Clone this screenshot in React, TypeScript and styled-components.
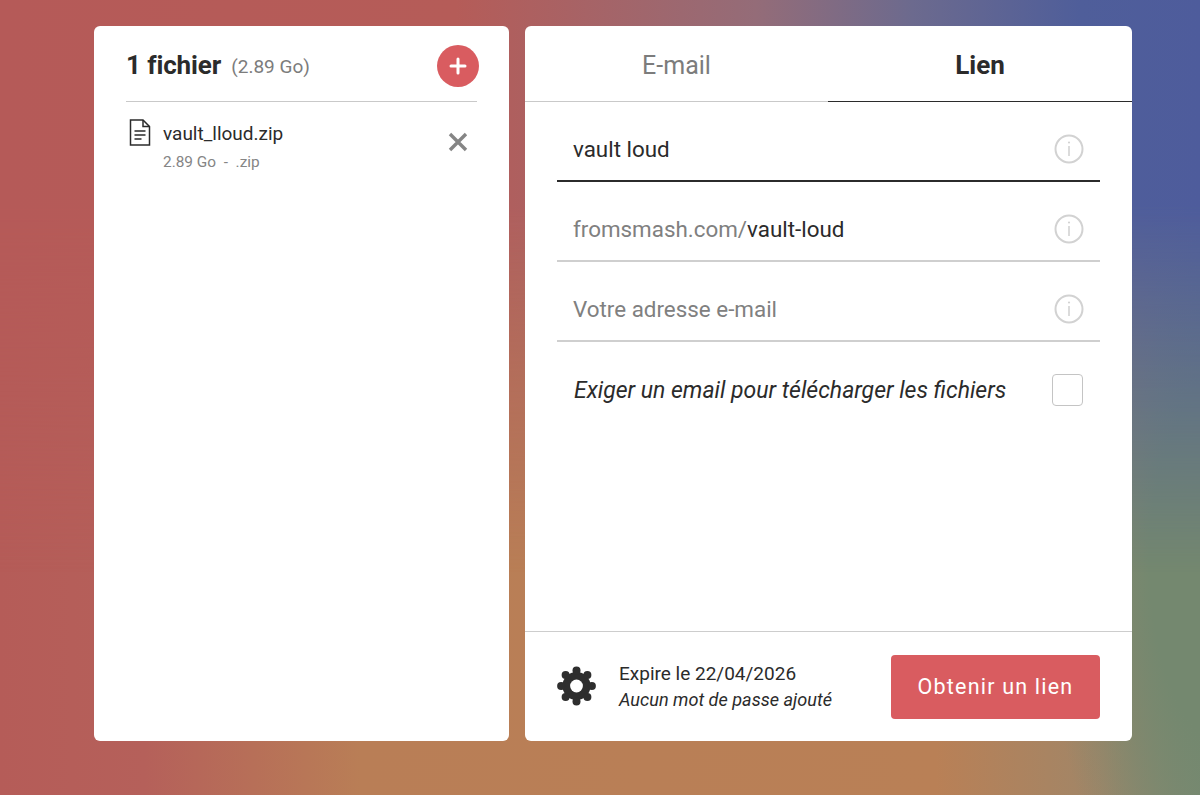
import styled, { createGlobalStyle } from 'styled-components';

const GlobalStyle = createGlobalStyle`
  html, body {
    margin: 0;
    padding: 0;
    height: 100%;
  }
  body {
    font-family: Roboto, "Liberation Sans", sans-serif;
    color: #2b2b2b;
  }
`;

const Page = styled.div`
  position: relative;
  isolation: isolate;
  width: 1200px;
  height: 795px;
  overflow: hidden;
  box-sizing: border-box;
  padding: 26px 68px 54px 94px;
  display: flex;
  gap: 16px;
  background:
    radial-gradient(ellipse 190px 420px at 1235px 560px, #74886f 0%, #74886f 45%, rgba(116, 136, 111, 0) 100%),
    linear-gradient(90deg, #b55c58 0%, #b5605a 12%, #b97e56 30%, #b98056 78%, #a08668 92%, #7c8a72 100%);

  /* blurred photo look: the cool top colours fade out towards the bottom */
  &::before {
    content: '';
    position: absolute;
    inset: 0;
    z-index: -1;
    background: linear-gradient(90deg, #b55a58 0%, #b55c58 38%, #946c78 63%, #6c6a8e 76%, #4f5e9a 90%, #4e5c9c 100%);
    mask-image: linear-gradient(180deg, #000 0%, #000 26%, transparent 72%);
  }
`;

const Card = styled.section<{ $width: number }>`
  width: ${(p) => p.$width}px;
  background: #fff;
  border-radius: 6px;
  display: flex;
  flex-direction: column;
  overflow: hidden;
`;

const FilesHeader = styled.div`
  height: 76px;
  margin: 0 32px;
  padding-top: 2px;
  box-sizing: border-box;
  border-bottom: 1px solid #c9c9c9;
  display: flex;
  align-items: center;
`;

const FilesTitle = styled.h2`
  margin: 0 10px 0 0;
  font-size: 26px;
  font-weight: 700;
  letter-spacing: -0.1px;
  color: #2b2b2b;
`;

const FilesSize = styled.span`
  font-size: 19px;
  color: #7c7c7c;
  margin-top: 3px;
`;

const AddButton = styled.button`
  margin: 2px -2px 0 auto;
  width: 42px;
  height: 42px;
  border: 0;
  border-radius: 50%;
  padding: 0;
  background: #d95c60;
  display: flex;
  align-items: center;
  justify-content: center;
`;

const FileRow = styled.div`
  display: flex;
  align-items: flex-start;
  padding: 17px 40px 0 35px;
`;

const FileIcon = styled.svg`
  width: 22px;
  height: 27px;
  flex: none;
  margin-right: 12px;
`;

const FileInfo = styled.div`
  flex: 1;
  display: flex;
  flex-direction: column;
  padding-top: 3px;
`;

const FileName = styled.span`
  font-size: 19px;
  line-height: 24px;
  color: #2b2b2b;
`;

const FileMeta = styled.span`
  font-size: 15.4px;
  line-height: 20px;
  margin-top: 6px;
  color: #858585;
  white-space: pre;
`;

const RemoveIcon = styled.svg`
  width: 22px;
  height: 22px;
  margin-top: 12px;
`;

const Tabs = styled.div`
  display: flex;
  height: 76px;
  flex: none;
`;

const Tab = styled.div<{ $active?: boolean }>`
  flex: 1 1 ${(p) => (p.$active ? 304 : 303)}px;
  display: flex;
  align-items: center;
  justify-content: center;
  box-sizing: border-box;
  padding-top: 3px;
  font-size: ${(p) => (p.$active ? 26 : 25)}px;
  font-weight: ${(p) => (p.$active ? 700 : 400)};
  color: ${(p) => (p.$active ? '#2b2b2b' : '#7c7c7c')};
  border-bottom: 1px solid ${(p) => (p.$active ? '#2b2b2b' : '#c9c9c9')};
`;

const Form = styled.div`
  flex: 1;
  padding: 0 32px;
`;

const Field = styled.div<{ $focused?: boolean }>`
  height: 80px;
  box-sizing: border-box;
  padding: 16px 16px 0 16px;
  display: flex;
  align-items: center;
  font-size: 22.4px;
  border-bottom: ${(p) => (p.$focused ? '2px solid #2b2b2b' : '2px solid #cfcfcf')};
`;

const FieldText = styled.span<{ $muted?: boolean }>`
  flex: 1;
  color: ${(p) => (p.$muted ? '#808080' : '#2b2b2b')};
`;

const InfoIcon = styled.svg`
  width: 30px;
  height: 30px;
  flex: none;
`;

const CheckRow = styled.div`
  height: 96px;
  box-sizing: border-box;
  padding: 0 17px 0 17px;
  display: flex;
  align-items: center;
  justify-content: space-between;
  font-size: 23px;
  font-style: italic;
  color: #2b2b2b;
`;

const Checkbox = styled.span`
  width: 31px;
  height: 32px;
  box-sizing: border-box;
  border: 1px solid #c4c4c4;
  border-radius: 4px;
`;

const Footer = styled.div`
  height: 110px;
  flex: none;
  box-sizing: border-box;
  border-top: 1px solid #cdcdcd;
  padding: 0 32px;
  display: flex;
  align-items: center;
`;

const GearIcon = styled.svg`
  width: 40px;
  height: 40px;
  flex: none;
  margin-top: -1px;
  margin-right: 22px;
`;

const Expiry = styled.div`
  flex: 1;
  display: flex;
  flex-direction: column;
  gap: 3px;
  font-size: 19px;
  line-height: 23px;
  color: #2b2b2b;
`;

const ExpiryNote = styled.span`
  font-style: italic;
  font-size: 18.1px;
`;

const SubmitButton = styled.button`
  width: 209px;
  height: 64px;
  border: 0;
  border-radius: 4px;
  background: #d95c60;
  color: #fff;
  font-family: inherit;
  font-size: 21.5px;
  letter-spacing: 1.2px;
`;

const Info = () => (
  <InfoIcon viewBox="0 0 30 30" fill="none">
    <circle cx="15" cy="15" r="13.5" stroke="#d2d2d2" strokeWidth="2" />
    <line x1="15" y1="12" x2="15" y2="22" stroke="#d2d2d2" strokeWidth="1.6" />
    <circle cx="15" cy="8.5" r="1.1" fill="#d2d2d2" />
  </InfoIcon>
);

const lobes = [0, 45, 90, 135, 180, 225, 270, 315];

const Gear = () => (
  <GearIcon viewBox="0 0 40 40">
    <circle cx="19.5" cy="20" r="14" fill="#2e2e2e" />
    {lobes.map((deg) => (
      <circle
        key={deg}
        cx={19.5 + 15.4 * Math.cos((deg * Math.PI) / 180)}
        cy={20 + 15.4 * Math.sin((deg * Math.PI) / 180)}
        r="4"
        fill="#2e2e2e"
      />
    ))}
    <circle cx="19.5" cy="20" r="6.4" fill="#fff" />
  </GearIcon>
);

export default function App() {
  return (
    <Page>
      <GlobalStyle />
      <Card $width={415}>
        <FilesHeader>
          <FilesTitle>1 fichier</FilesTitle>
          <FilesSize>(2.89 Go)</FilesSize>
          <AddButton aria-label="Ajouter">
            <svg width="18" height="18" viewBox="0 0 18 18">
              <path d="M9 2v14M2 9h14" stroke="#fff" strokeWidth="3" strokeLinecap="round" />
            </svg>
          </AddButton>
        </FilesHeader>
        <FileRow>
          <FileIcon viewBox="0 0 22 27" fill="none" stroke="#2b2b2b" strokeWidth="1.5">
            <path d="M1.5 1h12.5l6.5 6.5V26H1.5z" />
            <path d="M14 1v6.5h6.5" />
            <path d="M5.5 12h11M5.5 16h11M5.5 20h7" />
          </FileIcon>
          <FileInfo>
            <FileName>vault_lloud.zip</FileName>
            <FileMeta>2.89 Go  -  .zip</FileMeta>
          </FileInfo>
          <RemoveIcon viewBox="0 0 22 22">
            <path d="M3 3l16 16M19 3L3 19" stroke="#858585" strokeWidth="3.4" />
          </RemoveIcon>
        </FileRow>
      </Card>
      <Card $width={607}>
        <Tabs>
          <Tab>E-mail</Tab>
          <Tab $active>Lien</Tab>
        </Tabs>
        <Form>
          <Field $focused>
            <FieldText>vault loud</FieldText>
            <Info />
          </Field>
          <Field>
            <FieldText>
              <FieldText $muted>fromsmash.com/</FieldText>vault-loud
            </FieldText>
            <Info />
          </Field>
          <Field>
            <FieldText $muted>Votre adresse e-mail</FieldText>
            <Info />
          </Field>
          <CheckRow>
            Exiger un email pour télécharger les fichiers
            <Checkbox />
          </CheckRow>
        </Form>
        <Footer>
          <Gear />
          <Expiry>
            <span>Expire le 22/04/2026</span>
            <ExpiryNote>Aucun mot de passe ajouté</ExpiryNote>
          </Expiry>
          <SubmitButton>Obtenir un lien</SubmitButton>
        </Footer>
      </Card>
    </Page>
  );
}
